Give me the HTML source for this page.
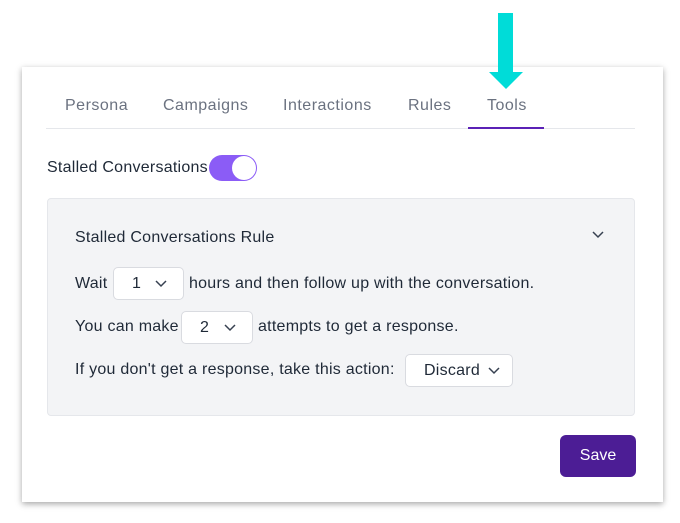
<!DOCTYPE html>
<html><head><style>
body{margin:0;width:680px;height:523px;background:#fff;font-family:"Liberation Sans",sans-serif;position:relative;overflow:hidden;color:#1f2937}
.card{position:absolute;left:22px;top:67px;width:641px;height:435px;background:#fff;box-shadow:0 2px 6px rgba(0,0,0,.35);}
.a{position:absolute}
.tab{position:absolute;top:97px;font-size:16px;letter-spacing:0.5px;color:#6b7280}
.sel{position:absolute;background:#fff;border:1px solid #d9dbe0;border-radius:5px;box-sizing:border-box;font-size:16px;letter-spacing:0.25px;color:#1f2937}
.t{position:absolute;font-size:16px;letter-spacing:0.25px;color:#1f2937;white-space:nowrap}
</style></head><body>
<div class="card"></div>
<div class="a" style="left:498px;top:13px;width:15px;height:60px;background:#00dcd8"></div>
<div class="a" style="left:489px;top:72px;width:0;height:0;border-left:17px solid transparent;border-right:17px solid transparent;border-top:17px solid #00dcd8"></div>
<div class="tab" style="left:65px">Persona</div>
<div class="tab" style="left:163px">Campaigns</div>
<div class="tab" style="left:283px">Interactions</div>
<div class="tab" style="left:408px">Rules</div>
<div class="tab" style="left:487px">Tools</div>
<div class="a" style="left:46px;top:128px;width:589px;height:1px;background:#e5e7eb"></div>
<div class="a" style="left:468px;top:127px;width:76px;height:2px;background:#5b21b6"></div>
<div class="t" style="left:47px;top:159px">Stalled Conversations</div>
<div class="a" style="left:209px;top:155px;width:48px;height:26px;border-radius:13px;background:#8b5cf6"></div>
<div class="a" style="left:232px;top:156px;width:24px;height:24px;border-radius:12px;background:#fff"></div>
<div class="a" style="left:47px;top:198px;width:588px;height:218px;background:#f3f4f6;border:1px solid #e5e7eb;border-radius:4px;box-sizing:border-box"></div>
<div class="t" style="left:75px;top:229px">Stalled Conversations Rule</div>
<svg class="a" style="left:591px;top:230px" width="14" height="10"><path d="M2 2l5 5 5-5" fill="none" stroke="#374151" stroke-width="1.5"/></svg>
<div class="t" style="left:75px;top:275px">Wait</div>
<div class="sel" style="left:113px;top:267px;width:71px;height:33px"><span class="a" style="left:18px;top:7px">1</span><svg class="a" style="left:40px;top:11px" width="14" height="10"><path d="M2 2l5 5 5-5" fill="none" stroke="#374151" stroke-width="1.5"/></svg></div>
<div class="t" style="left:189px;top:275px">hours and then follow up with the conversation.</div>
<div class="t" style="left:75px;top:318px">You can make</div>
<div class="sel" style="left:181px;top:311px;width:72px;height:33px"><span class="a" style="left:18px;top:7px">2</span><svg class="a" style="left:41px;top:11px" width="14" height="10"><path d="M2 2l5 5 5-5" fill="none" stroke="#374151" stroke-width="1.5"/></svg></div>
<div class="t" style="left:258px;top:318px">attempts to get a response.</div>
<div class="t" style="left:75px;top:361px">If you don't get a response, take this action:</div>
<div class="sel" style="left:405px;top:354px;width:108px;height:33px"><span class="a" style="left:18px;top:7px">Discard</span><svg class="a" style="left:81px;top:11px" width="14" height="10"><path d="M2 2l5 5 5-5" fill="none" stroke="#374151" stroke-width="1.5"/></svg></div>
<div class="a" style="left:560px;top:435px;width:76px;height:42px;background:#4c1d95;border-radius:6px;color:#fff;font-size:16px;line-height:42px;text-align:center">Save</div>
</body></html>
